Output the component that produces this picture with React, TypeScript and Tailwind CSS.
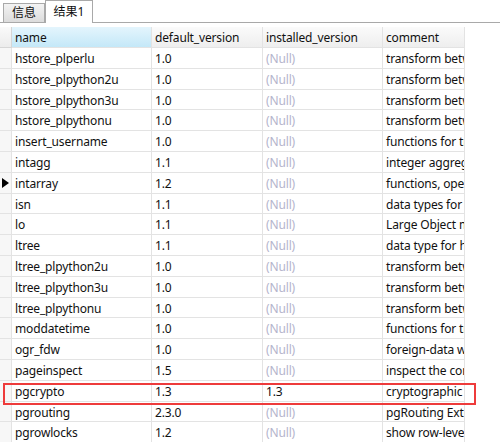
const rows: [string, string, string | null, string][] = [
  ['hstore_plperlu', '1.0', null, 'transform between hstore and plperl'],
  ['hstore_plpython2u', '1.0', null, 'transform between hstore and plpython2u'],
  ['hstore_plpython3u', '1.0', null, 'transform between hstore and plpython3u'],
  ['hstore_plpythonu', '1.0', null, 'transform between hstore and plpythonu'],
  ['insert_username', '1.0', null, 'functions for tracking who changed a table'],
  ['intagg', '1.1', null, 'integer aggregator and enumerator'],
  ['intarray', '1.2', null, 'functions, operators, and index support'],
  ['isn', '1.1', null, 'data types for international product numbering'],
  ['lo', '1.1', null, 'Large Object maintenance'],
  ['ltree', '1.1', null, 'data type for hierarchical tree-like structures'],
  ['ltree_plpython2u', '1.0', null, 'transform between ltree and plpython2u'],
  ['ltree_plpython3u', '1.0', null, 'transform between ltree and plpython3u'],
  ['ltree_plpythonu', '1.0', null, 'transform between ltree and plpythonu'],
  ['moddatetime', '1.0', null, 'functions for tracking last modification time'],
  ['ogr_fdw', '1.0', null, 'foreign-data wrapper for GIS data access'],
  ['pageinspect', '1.5', null, 'inspect the contents of database pages'],
  ['pgcrypto', '1.3', '1.3', 'cryptographic functions'],
  ['pgrouting', '2.3.0', null, 'pgRouting Extension'],
  ['pgrowlocks', '1.2', null, 'show row-level locking information'],
]

const cols = 'grid grid-cols-[12px_140px_111px_120px_82px]'
const cell = 'h-full border-r border-b border-[#e3e3e3] pl-[3px] pt-[2px] overflow-hidden whitespace-nowrap leading-[18px] tracking-[-0.15px]'

export default function App() {
  return (
    <div className="relative w-[500px] h-[442px] overflow-hidden bg-white text-[12px] text-[#111]" style={{ fontFamily: '"Noto Sans", "Noto Sans CJK SC", sans-serif' }}>
      {/* tabs */}
      <div className="flex items-end h-[23px] border-b border-[#a9a9a9] pl-[3px]">
        <div className="h-[19px] w-[42px] flex items-center justify-center border border-b-0 border-[#a9a9a9] bg-gradient-to-b from-[#f3f3f3] to-[#dcdcdc] text-[12px]">
          信息
        </div>
        <div className="h-[23px] w-[48px] -mb-px flex items-center justify-center border border-b-0 border-[#a9a9a9] bg-white text-[12px]">
          结果1
        </div>
      </div>

      <div className="mt-[4px]">
        <div className={`${cols} h-[21px]`}>
          <div className="border-r border-b border-[#d6d6d6] bg-gradient-to-b from-[#fafafa] to-[#ececec]" />
          <div className={`${cell} border-[#d6d6d6] bg-gradient-to-b from-[#e4f5fd] to-[#c4e8f8]`}>name</div>
          <div className={`${cell} border-[#d6d6d6] bg-gradient-to-b from-[#fbfbfb] to-[#eeeeee]`}>default_version</div>
          <div className={`${cell} border-[#d6d6d6] bg-gradient-to-b from-[#fbfbfb] to-[#eeeeee]`}>installed_version</div>
          <div className={`${cell} border-[#d6d6d6] bg-gradient-to-b from-[#fbfbfb] to-[#eeeeee]`}>comment</div>
        </div>
        {rows.map(([name, def, inst, comment]) => (
          <div key={name} className={`${cols} h-[20.8px]`}>
            <div className="relative border-r border-b border-[#e3e3e3] bg-[#f7f7f7]">
              {name === 'intarray' && (
                <svg className="absolute left-[2px] top-[5px]" width="7" height="10" viewBox="0 0 7 10">
                  <path d="M0 0 L7 5 L0 10 Z" fill="#000" />
                </svg>
              )}
            </div>
            <div className={cell}>{name}</div>
            <div className={cell}>{def}</div>
            <div className={`${cell} ${inst ? '' : 'text-[#b4b4cc]'}`}>{inst ?? '(Null)'}</div>
            <div className={cell}>{comment}</div>
          </div>
        ))}
      </div>

      {/* highlight */}
      <div className="absolute left-[3px] top-[383px] w-[473px] h-[22px] border-2 border-[#ee3b3b]" />
    </div>
  )
}
